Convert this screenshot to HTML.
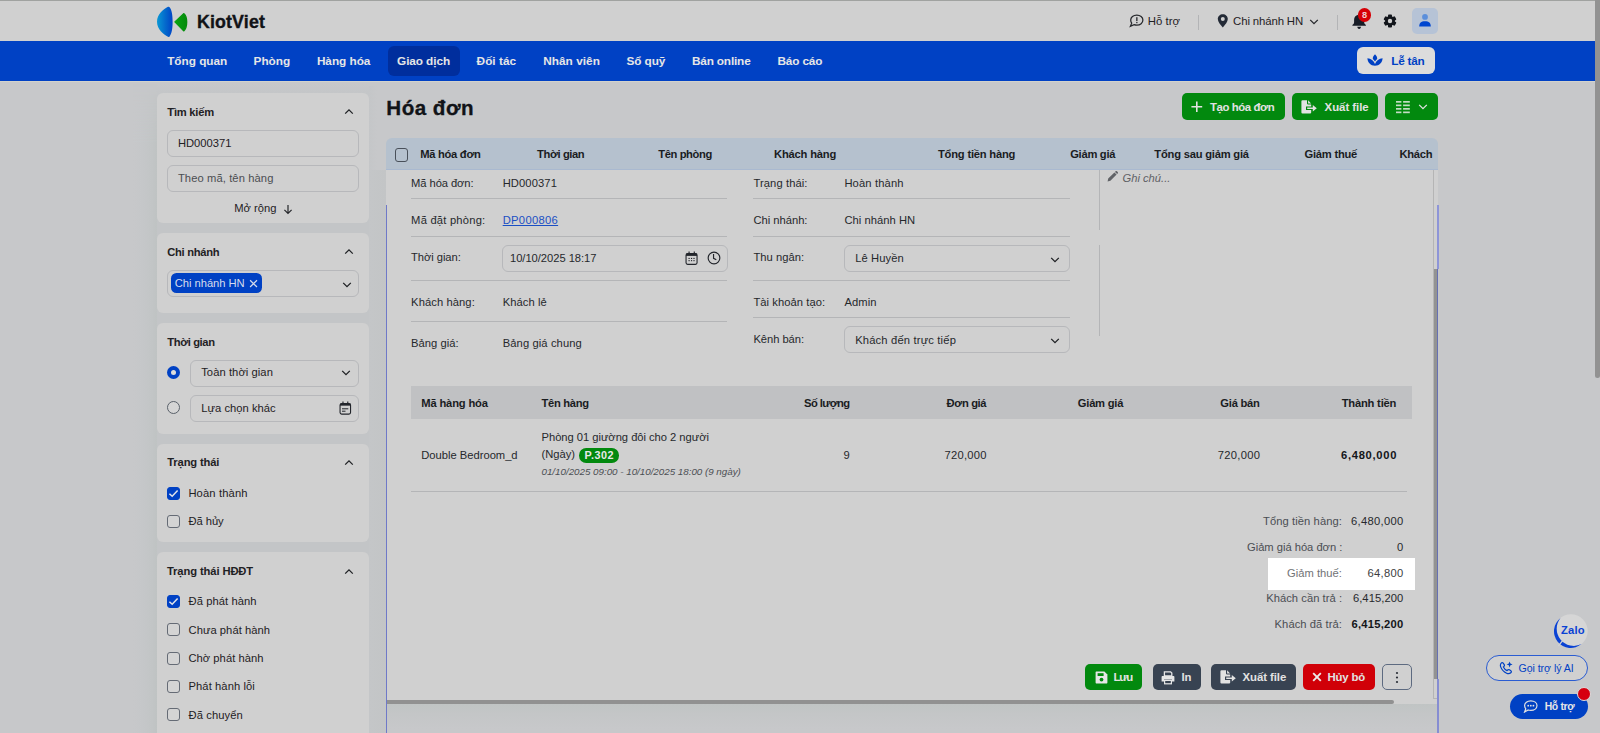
<!DOCTYPE html>
<html lang="vi">
<head>
<meta charset="utf-8">
<title>Hóa đơn - KiotViet</title>
<style>
html,body{margin:0;padding:0;}
body{width:1600px;height:733px;overflow:hidden;background:#c7c8ca;font-family:"Liberation Sans",sans-serif;}
#app{position:relative;width:1600px;height:733px;overflow:hidden;background:#c7c8ca;}
#app div,#app span,#app svg{position:absolute;box-sizing:border-box;}
.t{white-space:nowrap;}
.card{background:#d0d0d0;border-radius:6px;}
.inp{border:1px solid #b7b8bb;border-radius:6px;background:#d0d0d0;}
.cb{width:13.4px;height:13.2px;border:1.1px solid #656b75;border-radius:3px;background:#d4d4d4;}
.cb.on{background:#0041c4;border-color:#0041c4;}
.hl{height:1px;background:#b4b5b7;}
.btn{border-radius:5px;height:26px;}
.g{background:#02890e;}
.dk{background:#384352;}
</style>
</head>
<body>
<div id="app">
<div style="left:0;top:0;width:1595px;height:41px;background:#d0d0d0"></div>
<div style="left:0;top:0;width:1600px;height:1.1px;background:#a0a2a0"></div>
<div style="left:0;top:41px;width:1595px;height:39.6px;background:#0041c4"></div>
<div style="left:1595px;top:0;width:5px;height:378px;background:#929292;border-radius:0 0 3px 3px"></div>
<svg style="left:155px;top:5px" width="36" height="34" viewBox="155 5 36 34">
<defs><linearGradient id="lg1" x1="0" y1="0" x2="1" y2="0"><stop offset="0" stop-color="#0a98d4"/><stop offset=".55" stop-color="#0468cc"/><stop offset="1" stop-color="#0044c6"/></linearGradient>
<linearGradient id="lg2" x1="0" y1="0" x2="1" y2="0"><stop offset="0" stop-color="#08a410"/><stop offset="1" stop-color="#058a0c"/></linearGradient></defs>
<path d="M168 6.8 Q168.9 6.4 169.6 7.2 C171.6 9.4 172.7 15 172.6 21.8 C172.7 28.6 171.6 34.2 169.6 36.4 Q168.9 37.2 168 36.8 C163.6 34.8 157 29.2 157 21.8 C157 14.4 163.6 8.8 168 6.8 Z" fill="url(#lg1)"/>
<path d="M174.9 21.9 L183.7 13.6 C185.6 15 186.7 18.2 186.7 22.1 C186.7 26 185.6 29.4 183.7 30.9 Z" fill="url(#lg2)" stroke="url(#lg2)" stroke-width="1.3" stroke-linejoin="round"/>
</svg>
<svg style="left:1129px;top:14px" width="15" height="14" viewBox="0 0 15 14"><path d="M7.8 1.1 C11.3 1.1 13.9 3.3 13.9 6.1 C13.9 8.9 11.3 11.1 7.8 11.1 C6.8 11.1 5.9 10.9 5.1 10.6 L1.4 12.3 L2.7 9.2 C2 8.3 1.7 7.3 1.7 6.1 C1.7 3.3 4.3 1.1 7.8 1.1 Z" fill="none" stroke="#26282c" stroke-width="1.25"/><rect x="7.2" y="3.2" width="1.3" height="3.8" fill="#26282c"/><rect x="7.2" y="7.9" width="1.3" height="1.3" fill="#26282c"/></svg>
<div style="left:1198px;top:15px;width:1px;height:15px;background:#b3b4b6"></div>
<svg style="left:1217px;top:14px" width="12" height="14" viewBox="0 0 12 14"><path d="M5.8 0.2 C8.6 0.2 10.8 2.3 10.8 5 C10.8 7.6 8.3 10.8 5.8 13.4 C3.3 10.8 0.8 7.6 0.8 5 C0.8 2.3 3 0.2 5.8 0.2 Z M5.8 3 A2 2 0 1 0 5.8 7 A2 2 0 1 0 5.8 3 Z" fill="#232a36" fill-rule="evenodd"/></svg>
<svg style="left:1308.8px;top:17.8px" width="10" height="7" viewBox="0 0 10 7"><path d="M1.2 1.9 L5 5.7 L8.8 1.9" fill="none" stroke="#26282c" stroke-width="1.3"/></svg>
<div style="left:1337px;top:15px;width:1px;height:15px;background:#b3b4b6"></div>
<svg style="left:1351px;top:13px" width="17" height="17" viewBox="0 0 17 17"><path d="M8.15 .5 C8.8 .5 9.2 .9 9.2 1.5 L9.2 1.8 C11.7 2.3 13.2 4.3 13.2 6.8 L13.2 9.2 C13.2 10.3 13.7 11.1 14.9 11.9 L14.9 12.7 L1.4 12.7 L1.4 11.9 C2.6 11.1 3.1 10.3 3.1 9.2 L3.1 6.8 C3.1 4.3 4.6 2.3 7.1 1.8 L7.1 1.5 C7.1 .9 7.5 .5 8.15 .5 Z M6.3 13.8 L10 13.8 C10 15 9.2 15.9 8.15 15.9 C7.1 15.9 6.3 15 6.3 13.8 Z" fill="#171c26"/></svg>
<div style="left:1358.1px;top:8.2px;width:13px;height:13.6px;border-radius:7px;background:#d60006"></div>
<svg style="left:1383px;top:14px" width="14" height="14" viewBox="-7 -7 14 14"><g fill="#12151b"><circle r="4.9"/><rect x="-2" y="-6.4" width="4" height="12.8" rx=".9"/><rect x="-2" y="-6.4" width="4" height="12.8" rx=".9" transform="rotate(60)"/><rect x="-2" y="-6.4" width="4" height="12.8" rx=".9" transform="rotate(120)"/></g><circle r="2.2" fill="#d0d0d0"/></svg>
<div style="left:1412px;top:7.7px;width:26px;height:26px;border-radius:5px;background:#b6c3d6"></div>
<svg style="left:1418px;top:13px" width="14" height="15" viewBox="0 0 14 15"><circle cx="7" cy="3.9" r="2.9" fill="#5b8fdb"/><path d="M1.2 13.4 C1.2 10.2 3 8.3 7 8.3 C11 8.3 12.8 10.2 12.8 13.4 Z" fill="#0046d0"/></svg>
<div style="left:387.7px;top:46px;width:72px;height:29.6px;border-radius:6px;background:#002e9d"></div>
<div style="left:1357.2px;top:47.2px;width:78px;height:27px;border-radius:6px;background:#dcdcdc"></div>
<svg style="left:1367px;top:54px" width="16" height="12" viewBox="0 0 16 12"><g fill="#0041c4"><path d="M8 0.3 C9.6 1.8 10.3 3.4 10.2 5 C9.5 5.6 8.8 6.4 8 7.4 C7.2 6.4 6.5 5.6 5.8 5 C5.7 3.4 6.4 1.8 8 0.3 Z"/><path d="M0.4 4.2 C4 4.4 6.8 6.6 8 10 C9.2 6.6 12 4.4 15.6 4.2 C15.4 8.6 12.4 11.6 8 11.7 C3.6 11.6 0.6 8.6 0.4 4.2 Z"/></g></svg>
<div style="left:0;top:80.7px;width:1595px;height:1.1px;background:#d3d3cc"></div>
<div style="left:133px;top:84px;width:24px;height:649px;background:linear-gradient(to right,#c7c8ca,#c5c7c9 40%,#c2c5c6 78%,#bfc3c3);-webkit-mask-image:linear-gradient(transparent,rgba(0,0,0,.45) 14px,#000 60px);mask-image:linear-gradient(transparent,rgba(0,0,0,.45) 14px,#000 60px)"></div>
<div style="left:157px;top:84px;width:212px;height:649px;background:linear-gradient(#c7c8ca,#c4c6c8 9px,#c3c5c7 40px)"></div>
<div style="left:369px;top:86px;width:17px;height:84px;background:linear-gradient(to right,#c4c6c8,#c7c8ca 8px)"></div>
<div style="left:369px;top:170px;width:17px;height:563px;background:linear-gradient(to right,#c4c6c8,#c3c5c6)"></div>
<div class="card" style="left:156.8px;top:93px;width:212.4px;height:130px"></div>
<div class="card" style="left:156.8px;top:233.4px;width:212.4px;height:79.4px"></div>
<div class="card" style="left:156.8px;top:323.3px;width:212.4px;height:110.8px"></div>
<div class="card" style="left:156.8px;top:443.6px;width:212.4px;height:98.2px"></div>
<div class="card" style="left:156.8px;top:552.4px;width:212.4px;height:200px"></div>
<svg style="left:344px;top:108.3px" width="10" height="7" viewBox="0 0 10 7"><path d="M1.2 5.6 L5 1.8 L8.8 5.6" fill="none" stroke="#1f2124" stroke-width="1.3"/></svg>
<svg style="left:344px;top:248.3px" width="10" height="7" viewBox="0 0 10 7"><path d="M1.2 5.6 L5 1.8 L8.8 5.6" fill="none" stroke="#1f2124" stroke-width="1.3"/></svg>
<svg style="left:344px;top:459.0px" width="10" height="7" viewBox="0 0 10 7"><path d="M1.2 5.6 L5 1.8 L8.8 5.6" fill="none" stroke="#1f2124" stroke-width="1.3"/></svg>
<svg style="left:344px;top:567.6px" width="10" height="7" viewBox="0 0 10 7"><path d="M1.2 5.6 L5 1.8 L8.8 5.6" fill="none" stroke="#1f2124" stroke-width="1.3"/></svg>
<div class="inp" style="left:166.8px;top:130.1px;width:192px;height:26.6px"></div>
<div class="inp" style="left:166.8px;top:165.1px;width:192px;height:26.6px"></div>
<svg style="left:283px;top:203.6px" width="10" height="11" viewBox="0 0 10 11"><path d="M5 1 L5 9.2 M1.4 5.8 L5 9.4 L8.6 5.8" fill="none" stroke="#26282c" stroke-width="1.2"/></svg>
<div class="inp" style="left:166.8px;top:269.8px;width:192px;height:27px"></div>
<div style="left:170.9px;top:273.1px;width:91.5px;height:19.8px;border-radius:5.5px;background:#0041c4"></div>
<svg style="left:249.3px;top:278.6px" width="9" height="9" viewBox="0 0 9 9"><path d="M1.1 1.2 L8 8 M8 1.2 L1.1 8" stroke="#d4daea" stroke-width="1.25"/></svg>
<svg style="left:341.6px;top:280.6px" width="10" height="7" viewBox="0 0 10 7"><path d="M1.2 1.9 L5 5.7 L8.8 1.9" fill="none" stroke="#1f2124" stroke-width="1.3"/></svg>
<div style="left:166.7px;top:365.7px;width:13.5px;height:13.5px;border-radius:7px;background:#0041c4"></div>
<div style="left:170.8px;top:369.8px;width:5.3px;height:5.3px;border-radius:3px;background:#dcdcdc"></div>
<div style="left:166.5px;top:400.5px;width:13.6px;height:13.6px;border-radius:7px;border:1.2px solid #596069;background:#d5d5d5"></div>
<div class="inp" style="left:190px;top:359.8px;width:168.8px;height:27px"></div>
<div class="inp" style="left:190px;top:395px;width:168.8px;height:27px"></div>
<svg style="left:341px;top:369.4px" width="10" height="7" viewBox="0 0 10 7"><path d="M1.2 1.9 L5 5.7 L8.8 1.9" fill="none" stroke="#1f2124" stroke-width="1.3"/></svg>
<svg style="left:339.4px;top:401px" width="13" height="15" viewBox="0 0 13 15"><rect x="1.05" y="2.55" width="10.5" height="10.6" rx="1.6" fill="none" stroke="#22252b" stroke-width="1.1"/><rect x="1.05" y="2.55" width="10.5" height="2.1" fill="#22252b"/><rect x="3.4" y="0.5" width="1.15" height="2.4" fill="#22252b"/><rect x="8.2" y="0.5" width="1.15" height="2.4" fill="#22252b"/><rect x="3" y="7.3" width="6.3" height="1" fill="#22252b"/><rect x="3" y="9.7" width="3.5" height="1" fill="#22252b"/></svg>
<div class="cb on" style="left:166.7px;top:486.6px"><svg style="left:.7px;top:1.2px" width="11" height="9" viewBox="0 0 11 9"><path d="M1.4 4.7 L4.2 7.3 L9.6 1.6" fill="none" stroke="#e2e4ea" stroke-width="1.5"/></svg></div>
<div class="cb" style="left:166.7px;top:514.9px"></div>
<div class="cb on" style="left:166.7px;top:595px"><svg style="left:.7px;top:1.2px" width="11" height="9" viewBox="0 0 11 9"><path d="M1.4 4.7 L4.2 7.3 L9.6 1.6" fill="none" stroke="#e2e4ea" stroke-width="1.5"/></svg></div>
<div class="cb" style="left:166.7px;top:623.2px"></div>
<div class="cb" style="left:166.7px;top:651.6px"></div>
<div class="cb" style="left:166.7px;top:679.9px"></div>
<div class="cb" style="left:166.7px;top:708.2px"></div>
<div class="btn g" style="left:1182px;top:93.2px;width:103px;height:26.8px"></div>
<div class="btn g" style="left:1292px;top:93.2px;width:86px;height:26.8px"></div>
<div class="btn g" style="left:1385px;top:93.2px;width:53px;height:26.8px"></div>
<svg style="left:1190.6px;top:101.2px" width="12" height="12" viewBox="0 0 12 12"><path d="M5.8 0.4 L5.8 11 M0.4 5.7 L11.2 5.7" stroke="#e2e2e2" stroke-width="1.6"/></svg>
<svg style="left:1301.2px;top:100px" width="17" height="14" viewBox="0 0 17 14"><path d="M0.4 1.3 Q0.4 .2 1.5 .2 L6 .2 L6 3.4 Q6 4.5 7.1 4.5 L10.2 4.5 L10.2 6.5 L5 6.5 L5 10 L10.2 10 L10.2 12.4 Q10.2 13.5 9.1 13.5 L1.5 13.5 Q.4 13.5 .4 12.4 Z M7.1 .3 L10.1 3.4 L7.1 3.4 Z" fill="#e2e2e2"/><path d="M6.2 7.5 L11.8 7.5 L11.8 5.1 L15.8 8.25 L11.8 11.4 L11.8 9 L6.2 9 Z" fill="#e2e2e2"/></svg>
<svg style="left:1395.6px;top:100.6px" width="14" height="13" viewBox="0 0 14 13"><g fill="#c4dcc4"><rect x="0" y="0" width="5.4" height="1.7"/><rect x="7.1" y="0" width="6.7" height="1.7"/><rect x="0" y="3.5" width="5.4" height="1.7"/><rect x="7.1" y="3.5" width="6.7" height="1.7"/><rect x="0" y="7" width="5.4" height="1.7"/><rect x="7.1" y="7" width="6.7" height="1.7"/><rect x="0" y="10.5" width="5.4" height="1.7"/><rect x="7.1" y="10.5" width="6.7" height="1.7"/></g></svg>
<svg style="left:1417.6px;top:103.0px" width="10" height="7" viewBox="0 0 10 7"><path d="M1.2 1.9 L5 5.7 L8.8 1.9" fill="none" stroke="#e2e2e2" stroke-width="1.3"/></svg>
<div style="left:386px;top:150px;width:1052px;height:554.2px;background:#d0d0d0"></div>
<div style="left:386px;top:704.2px;width:1052px;height:29px;background:linear-gradient(#c0c4c4,#c4c6c7 10px,#c7c8ca 25px)"></div>
<div style="left:386px;top:138.2px;width:1052.2px;height:31.6px;border-radius:6px 6px 0 0;background:#b5c1ce;border-bottom:1px solid #a9b9d0"></div>
<div class="cb" style="left:395px;top:148px;width:12.8px;height:13.6px;border-color:#49505a;background:transparent"></div>
<div style="left:1433.2px;top:170px;width:4.8px;height:529.4px;background:#d0d0d0;border-left:1px solid #b5b5b5;border-bottom:1px solid #b5b5b5"></div>
<div style="left:1433.8px;top:269.2px;width:3.4px;height:410px;background:#939392"></div>
<div style="left:386px;top:700.1px;width:1007.6px;height:3.9px;background:#919191;border-radius:0 2px 2px 0"></div>
<div style="left:385.85px;top:205.2px;width:1.3px;height:530px;background:#6f79c8"></div>
<div style="left:1436.9px;top:204.9px;width:2px;height:64.4px;background:#8e95d8"></div>
<div style="left:1436.9px;top:269.2px;width:1.6px;height:410.2px;background:#6670b4"></div>
<div style="left:1437px;top:679.3px;width:1.5px;height:54px;background:#868dd2"></div>
<div class="hl" style="left:411px;top:198.15px;width:316.4px"></div>
<div class="hl" style="left:411px;top:236.0px;width:316.4px"></div>
<div class="hl" style="left:411px;top:280.0px;width:316.4px"></div>
<div class="hl" style="left:411px;top:321.1px;width:316.4px"></div>
<div class="hl" style="left:753.2px;top:198.15px;width:316.4px"></div>
<div class="hl" style="left:753.2px;top:236.0px;width:316.4px"></div>
<div class="hl" style="left:753.2px;top:280.0px;width:316.4px"></div>
<div class="hl" style="left:753.2px;top:317.2px;width:316.4px"></div>
<div style="left:1099.2px;top:170px;width:1px;height:60.4px;background:#b4b5b7"></div>
<div style="left:1099.2px;top:245.4px;width:1px;height:91px;background:#b4b5b7"></div>
<div class="inp" style="left:502.2px;top:245.2px;width:225.4px;height:26.6px;background:#d0d0d0"></div>
<div class="inp" style="left:844.4px;top:245.2px;width:225.4px;height:26.6px;background:#d0d0d0"></div>
<div class="inp" style="left:844.4px;top:326.1px;width:225.4px;height:27px;background:#d0d0d0"></div>
<svg style="left:1050px;top:255.6px" width="10" height="7" viewBox="0 0 10 7"><path d="M1.2 1.9 L5 5.7 L8.8 1.9" fill="none" stroke="#1f2124" stroke-width="1.3"/></svg>
<svg style="left:1050px;top:337.2px" width="10" height="7" viewBox="0 0 10 7"><path d="M1.2 1.9 L5 5.7 L8.8 1.9" fill="none" stroke="#1f2124" stroke-width="1.3"/></svg>
<svg style="left:685.4px;top:251.1px" width="14" height="15" viewBox="0 0 14 15"><rect x="1.05" y="2.6" width="11" height="10.8" rx="1.6" fill="none" stroke="#22252b" stroke-width="1.1"/><rect x="1.05" y="2.6" width="11" height="2.3" fill="#22252b"/><rect x="3.5" y="0.5" width="1.15" height="2.4" fill="#22252b"/><rect x="8.7" y="0.5" width="1.15" height="2.4" fill="#22252b"/><g fill="#22252b"><rect x="3.5" y="6.9" width="1.2" height="1.1"/><rect x="5.95" y="6.9" width="1.2" height="1.1"/><rect x="8.4" y="6.9" width="1.2" height="1.1"/><rect x="3.5" y="9.1" width="1.2" height="1.1"/><rect x="5.95" y="9.1" width="1.2" height="1.1"/><rect x="8.4" y="9.1" width="1.2" height="1.1"/></g></svg>
<svg style="left:706.6px;top:251.3px" width="14" height="14" viewBox="0 0 14 14"><circle cx="7" cy="7" r="5.85" fill="none" stroke="#22252b" stroke-width="1.15"/><path d="M6.55 2.9 L6.55 7.3 L9.3 8.8" fill="none" stroke="#22252b" stroke-width="1.15"/></svg>
<svg style="left:1107.2px;top:170.6px" width="11" height="11" viewBox="0 0 11 11"><path d="M0.6 10.4 L1.2 7.6 L7.4 1.4 L9.6 3.6 L3.4 9.8 Z M8 0.9 L8.6 0.3 C9 -0.1 9.5 -0.1 9.9 0.3 L10.7 1.1 C11.1 1.5 11.1 2 10.7 2.4 L10.1 3 Z" fill="#606266"/></svg>
<div style="left:411px;top:386.2px;width:1000.6px;height:32.6px;background:#c0c1c3"></div>
<div class="hl" style="left:411px;top:491px;width:995.6px"></div>
<div style="left:578.8px;top:448.2px;width:40.6px;height:14.4px;border-radius:7.2px;background:#02890e"></div>
<div style="left:1267.6px;top:558.2px;width:147px;height:31.6px;background:#ffffff"></div>
<div class="btn g" style="left:1084.8px;top:664.4px;width:57.6px"></div>
<div class="btn dk" style="left:1152.6px;top:664.4px;width:48px"></div>
<div class="btn dk" style="left:1211px;top:664.4px;width:84.6px"></div>
<div class="btn" style="left:1302.6px;top:664.4px;width:72.6px;background:#d00008"></div>
<div class="btn" style="left:1381.8px;top:664.4px;width:30px;border:1px solid #5d6a80;background:#d0d0d0"></div>
<svg style="left:1094.6px;top:671px" width="13" height="13" viewBox="0 0 13 13"><path d="M1.6 .6 L9.4 .6 L12.4 3.6 L12.4 11.4 C12.4 12 12 12.4 11.4 12.4 L1.6 12.4 C1 12.4 .6 12 .6 11.4 L.6 1.6 C.6 1 1 .6 1.6 .6 Z" fill="#e6e6e6"/><rect x="2.6" y="2.2" width="6" height="2.8" fill="#02890e"/><circle cx="6.5" cy="8.6" r="1.9" fill="#02890e"/></svg>
<svg style="left:1161.4px;top:670.6px" width="14" height="14" viewBox="0 0 14 14"><path d="M3.4 .8 L9.6 .8 L10.8 2 L10.8 5 L3.4 5 Z" fill="none" stroke="#e6e6e6" stroke-width="1.3"/><path d="M1.6 5 L12.4 5 C13 5 13.4 5.4 13.4 6 L13.4 10.4 L11 10.4 L11 8.4 L3 8.4 L3 10.4 L.6 10.4 L.6 6 C.6 5.4 1 5 1.6 5 Z" fill="#e6e6e6"/><rect x="3.6" y="9.4" width="6.8" height="3.4" fill="none" stroke="#e6e6e6" stroke-width="1.2"/></svg>
<svg style="left:1220.4px;top:670px" width="17" height="14" viewBox="0 0 17 14"><path d="M0.4 1.3 Q0.4 .2 1.5 .2 L6 .2 L6 3.4 Q6 4.5 7.1 4.5 L10.2 4.5 L10.2 6.5 L5 6.5 L5 10 L10.2 10 L10.2 12.4 Q10.2 13.5 9.1 13.5 L1.5 13.5 Q.4 13.5 .4 12.4 Z M7.1 .3 L10.1 3.4 L7.1 3.4 Z" fill="#e2e2e2"/><path d="M6.2 7.5 L11.8 7.5 L11.8 5.1 L15.8 8.25 L11.8 11.4 L11.8 9 L6.2 9 Z" fill="#e2e2e2"/></svg>
<svg style="left:1312px;top:672.4px" width="10" height="10" viewBox="0 0 10 10"><path d="M1.2 1.2 L8.8 8.8 M8.8 1.2 L1.2 8.8" stroke="#ececec" stroke-width="1.9"/></svg>
<svg style="left:1394.6px;top:671px" width="4" height="13" viewBox="0 0 4 13"><g fill="#2a2e36"><circle cx="2" cy="2" r="1.1"/><circle cx="2" cy="6.5" r="1.1"/><circle cx="2" cy="11" r="1.1"/></g></svg>
<svg style="left:1550px;top:610px" width="42" height="42" viewBox="1550 610 42 42"><circle cx="1570.9" cy="631.1" r="16.8" fill="#d6d6d6"/><path d="M1560.52 617.89 A16.8 16.8 0 1 0 1581.51 644.12 A17.2 17.2 0 0 1 1560.52 617.89 Z" fill="#0a42d4"/><path d="M1563.4 639.6 L1558.4 645.8" stroke="#d3d3d4" stroke-width="1.3" fill="none"/></svg>
<div style="left:1485.6px;top:654.6px;width:102.4px;height:26.8px;border-radius:13.4px;border:1px solid #2a5cd2;background:#d0d0d0"></div>
<svg style="left:1499px;top:661px" width="15" height="14" viewBox="0 0 15 14"><path d="M2.2 2.2 C2.8 1.4 3.6 1.4 4.2 2.2 L5.2 3.6 C5.6 4.2 5.5 4.8 5 5.3 L4.4 5.9 C5.2 7.6 6.4 8.8 8.1 9.6 L8.7 9 C9.2 8.5 9.8 8.4 10.4 8.8 L11.8 9.8 C12.6 10.4 12.6 11.2 11.8 11.8 C10.6 12.9 9.2 13 7.6 12.2 C4.6 10.7 2.6 8.4 1.6 5.6 C1.2 4.2 1.4 3.1 2.2 2.2 Z" fill="none" stroke="#0041c4" stroke-width="1.2"/><path d="M10.6 .4 L11.4 2.6 L13.6 3.4 L11.4 4.2 L10.6 6.4 L9.8 4.2 L7.6 3.4 L9.8 2.6 Z" fill="#0041c4"/></svg>
<div style="left:1510px;top:694.2px;width:77.6px;height:24.8px;border-radius:12.4px;background:#0041c4"></div>
<svg style="left:1523px;top:700.4px" width="15" height="13" viewBox="0 0 15 13"><path d="M7.8 .8 C11.4 .8 14 2.9 14 5.6 C14 8.3 11.4 10.4 7.8 10.4 C6.9 10.4 6 10.3 5.2 10 L1.6 12 L2.8 8.8 C2 7.9 1.6 6.8 1.6 5.6 C1.6 2.9 4.2 .8 7.8 .8 Z" fill="none" stroke="#e2e2e2" stroke-width="1.2"/><g fill="#e2e2e2"><circle cx="5.2" cy="5.7" r=".9"/><circle cx="7.8" cy="5.7" r=".9"/><circle cx="10.4" cy="5.7" r=".9"/></g></svg>
<div style="left:1577px;top:687.2px;width:14.2px;height:14.2px;border-radius:7.1px;background:#d6000f;border:1px solid #dcdcdc"></div>
<!-- text -->
<span class="t" style="top:14px;font-size:17.8px;line-height:17.8px;font-weight:700;color:#111317;letter-spacing:0.163px;left:196.90px;-webkit-text-stroke:.35px #111317;">KiotViet</span>
<span class="t" style="top:16px;font-size:11.4px;line-height:11.4px;font-weight:400;color:#1f2124;letter-spacing:-0.011px;left:1147.80px;">Hỗ trợ</span>
<span class="t" style="top:16px;font-size:11.4px;line-height:11.4px;font-weight:400;color:#1f2124;letter-spacing:-0.133px;left:1233.10px;">Chi nhánh HN</span>
<span class="t" style="top:11px;font-size:9.2px;line-height:9.2px;font-weight:700;color:#efcccc;left:1361.90px;">8</span>
<span class="t" style="top:56px;font-size:11.8px;line-height:11.8px;font-weight:700;color:#e6e6e6;letter-spacing:-0.023px;left:167.20px;">Tổng quan</span>
<span class="t" style="top:56px;font-size:11.8px;line-height:11.8px;font-weight:700;color:#e6e6e6;letter-spacing:-0.051px;left:253.60px;">Phòng</span>
<span class="t" style="top:56px;font-size:11.8px;line-height:11.8px;font-weight:700;color:#e6e6e6;letter-spacing:-0.036px;left:316.90px;">Hàng hóa</span>
<span class="t" style="top:56px;font-size:11.8px;line-height:11.8px;font-weight:700;color:#e6e6e6;letter-spacing:-0.094px;left:397.10px;">Giao dịch</span>
<span class="t" style="top:56px;font-size:11.8px;line-height:11.8px;font-weight:700;color:#e6e6e6;letter-spacing:0.026px;left:476.60px;">Đối tác</span>
<span class="t" style="top:56px;font-size:11.8px;line-height:11.8px;font-weight:700;color:#e6e6e6;letter-spacing:0.039px;left:543.20px;">Nhân viên</span>
<span class="t" style="top:56px;font-size:11.8px;line-height:11.8px;font-weight:700;color:#e6e6e6;letter-spacing:-0.126px;left:626.60px;">Sổ quỹ</span>
<span class="t" style="top:56px;font-size:11.8px;line-height:11.8px;font-weight:700;color:#e6e6e6;letter-spacing:-0.179px;left:692.00px;">Bán online</span>
<span class="t" style="top:56px;font-size:11.8px;line-height:11.8px;font-weight:700;color:#e6e6e6;letter-spacing:-0.134px;left:777.40px;">Báo cáo</span>
<span class="t" style="top:56px;font-size:11.8px;line-height:11.8px;font-weight:700;color:#0041c4;letter-spacing:-0.230px;left:1391.20px;">Lễ tân</span>
<span class="t" style="top:107px;font-size:11.2px;line-height:11.2px;font-weight:700;color:#1f2124;letter-spacing:-0.243px;left:167.30px;">Tìm kiếm</span>
<span class="t" style="top:138px;font-size:11.2px;line-height:11.2px;font-weight:400;color:#1f2124;letter-spacing:0.014px;left:177.90px;">HD000371</span>
<span class="t" style="top:173px;font-size:11.2px;line-height:11.2px;font-weight:400;color:#4c4e52;letter-spacing:0.099px;left:177.90px;">Theo mã, tên hàng</span>
<span class="t" style="top:203px;font-size:11.2px;line-height:11.2px;font-weight:400;color:#1f2124;letter-spacing:-0.009px;left:234.30px;">Mở rộng</span>
<span class="t" style="top:247px;font-size:11.2px;line-height:11.2px;font-weight:700;color:#1f2124;letter-spacing:-0.298px;left:167.30px;">Chi nhánh</span>
<span class="t" style="top:278px;font-size:11.2px;line-height:11.2px;font-weight:400;color:#d6dcec;letter-spacing:-0.035px;left:174.80px;">Chi nhánh HN</span>
<span class="t" style="top:337px;font-size:11.2px;line-height:11.2px;font-weight:700;color:#1f2124;letter-spacing:-0.393px;left:167.30px;">Thời gian</span>
<span class="t" style="top:367px;font-size:11.2px;line-height:11.2px;font-weight:400;color:#1f2124;letter-spacing:0.071px;left:201.20px;">Toàn thời gian</span>
<span class="t" style="top:403px;font-size:11.2px;line-height:11.2px;font-weight:400;color:#1f2124;letter-spacing:0.038px;left:201.20px;">Lựa chọn khác</span>
<span class="t" style="top:457px;font-size:11.2px;line-height:11.2px;font-weight:700;color:#1f2124;letter-spacing:-0.152px;left:167.30px;">Trạng thái</span>
<span class="t" style="top:488px;font-size:11.2px;line-height:11.2px;font-weight:400;color:#1f2124;letter-spacing:0.138px;left:188.40px;">Hoàn thành</span>
<span class="t" style="top:516px;font-size:11.2px;line-height:11.2px;font-weight:400;color:#1f2124;letter-spacing:-0.031px;left:188.40px;">Đã hủy</span>
<span class="t" style="top:566px;font-size:11.2px;line-height:11.2px;font-weight:700;color:#1f2124;letter-spacing:-0.096px;left:166.90px;">Trạng thái HĐĐT</span>
<span class="t" style="top:596px;font-size:11.2px;line-height:11.2px;font-weight:400;color:#1f2124;letter-spacing:0.083px;left:188.50px;">Đã phát hành</span>
<span class="t" style="top:625px;font-size:11.2px;line-height:11.2px;font-weight:400;color:#1f2124;letter-spacing:0.046px;left:188.50px;">Chưa phát hành</span>
<span class="t" style="top:653px;font-size:11.2px;line-height:11.2px;font-weight:400;color:#1f2124;letter-spacing:0.031px;left:188.50px;">Chờ phát hành</span>
<span class="t" style="top:681px;font-size:11.2px;line-height:11.2px;font-weight:400;color:#1f2124;letter-spacing:0.082px;left:188.50px;">Phát hành lỗi</span>
<span class="t" style="top:710px;font-size:11.2px;line-height:11.2px;font-weight:400;color:#1f2124;letter-spacing:0.100px;left:188.50px;">Đã chuyển</span>
<span class="t" style="top:98px;font-size:20.6px;line-height:20.6px;font-weight:700;color:#111317;letter-spacing:0.477px;left:386.30px;-webkit-text-stroke:.3px #111317;">Hóa đơn</span>
<span class="t" style="top:102px;font-size:11.4px;line-height:11.4px;font-weight:700;color:#e2e2e2;letter-spacing:-0.416px;left:1210.00px;">Tạo hóa đơn</span>
<span class="t" style="top:102px;font-size:11.4px;line-height:11.4px;font-weight:700;color:#e2e2e2;letter-spacing:-0.027px;left:1324.60px;">Xuất file</span>
<span class="t" style="top:149px;font-size:11.2px;line-height:11.2px;font-weight:700;color:#1a1c1f;letter-spacing:-0.298px;left:420.30px;">Mã hóa đơn</span>
<span class="t" style="top:149px;font-size:11.2px;line-height:11.2px;font-weight:700;color:#1a1c1f;letter-spacing:-0.405px;left:537.10px;">Thời gian</span>
<span class="t" style="top:149px;font-size:11.2px;line-height:11.2px;font-weight:700;color:#1a1c1f;letter-spacing:-0.384px;left:658.20px;">Tên phòng</span>
<span class="t" style="top:149px;font-size:11.2px;line-height:11.2px;font-weight:700;color:#1a1c1f;letter-spacing:-0.192px;left:774.00px;">Khách hàng</span>
<span class="t" style="top:149px;font-size:11.2px;line-height:11.2px;font-weight:700;color:#1a1c1f;letter-spacing:-0.213px;left:938.00px;">Tổng tiền hàng</span>
<span class="t" style="top:149px;font-size:11.2px;line-height:11.2px;font-weight:700;color:#1a1c1f;letter-spacing:-0.281px;left:1070.20px;">Giảm giá</span>
<span class="t" style="top:149px;font-size:11.2px;line-height:11.2px;font-weight:700;color:#1a1c1f;letter-spacing:-0.220px;left:1154.30px;">Tổng sau giảm giá</span>
<span class="t" style="top:149px;font-size:11.2px;line-height:11.2px;font-weight:700;color:#1a1c1f;letter-spacing:-0.238px;left:1304.50px;">Giảm thuế</span>
<span class="t" style="top:149px;font-size:11.2px;line-height:11.2px;font-weight:700;color:#1a1c1f;letter-spacing:-0.251px;left:1399.40px;">Khách</span>
<span class="t" style="top:178px;font-size:11.2px;line-height:11.2px;font-weight:400;color:#26282c;letter-spacing:-0.081px;left:411.10px;">Mã hóa đơn:</span>
<span class="t" style="top:215px;font-size:11.2px;line-height:11.2px;font-weight:400;color:#26282c;letter-spacing:0.214px;left:411.10px;">Mã đặt phòng:</span>
<span class="t" style="top:252px;font-size:11.2px;line-height:11.2px;font-weight:400;color:#26282c;letter-spacing:-0.061px;left:411.10px;">Thời gian:</span>
<span class="t" style="top:297px;font-size:11.2px;line-height:11.2px;font-weight:400;color:#26282c;letter-spacing:0.087px;left:411.10px;">Khách hàng:</span>
<span class="t" style="top:338px;font-size:11.2px;line-height:11.2px;font-weight:400;color:#26282c;letter-spacing:0.027px;left:411.10px;">Bảng giá:</span>
<span class="t" style="top:178px;font-size:11.2px;line-height:11.2px;font-weight:400;color:#26282c;letter-spacing:0.100px;left:502.70px;">HD000371</span>
<span class="t" style="top:215px;font-size:11.2px;line-height:11.2px;font-weight:400;color:#1a4fc4;letter-spacing:0.318px;left:502.70px;text-decoration:underline;text-underline-offset:1px;text-decoration-thickness:0.8px;">DP000806</span>
<span class="t" style="top:253px;font-size:11.2px;line-height:11.2px;font-weight:400;color:#26282c;letter-spacing:-0.041px;left:510.00px;">10/10/2025 18:17</span>
<span class="t" style="top:297px;font-size:11.2px;line-height:11.2px;font-weight:400;color:#26282c;letter-spacing:0.079px;left:502.70px;">Khách lẻ</span>
<span class="t" style="top:338px;font-size:11.2px;line-height:11.2px;font-weight:400;color:#26282c;letter-spacing:0.103px;left:502.70px;">Bảng giá chung</span>
<span class="t" style="top:178px;font-size:11.2px;line-height:11.2px;font-weight:400;color:#26282c;letter-spacing:0.102px;left:753.40px;">Trạng thái:</span>
<span class="t" style="top:215px;font-size:11.2px;line-height:11.2px;font-weight:400;color:#26282c;letter-spacing:-0.003px;left:753.40px;">Chi nhánh:</span>
<span class="t" style="top:252px;font-size:11.2px;line-height:11.2px;font-weight:400;color:#26282c;letter-spacing:0.039px;left:753.40px;">Thu ngân:</span>
<span class="t" style="top:297px;font-size:11.2px;line-height:11.2px;font-weight:400;color:#26282c;letter-spacing:0.061px;left:753.40px;">Tài khoản tạo:</span>
<span class="t" style="top:334px;font-size:11.2px;line-height:11.2px;font-weight:400;color:#26282c;letter-spacing:-0.039px;left:753.40px;">Kênh bán:</span>
<span class="t" style="top:178px;font-size:11.2px;line-height:11.2px;font-weight:400;color:#26282c;letter-spacing:0.138px;left:844.40px;">Hoàn thành</span>
<span class="t" style="top:215px;font-size:11.2px;line-height:11.2px;font-weight:400;color:#26282c;letter-spacing:0.038px;left:844.40px;">Chi nhánh HN</span>
<span class="t" style="top:253px;font-size:11.2px;line-height:11.2px;font-weight:400;color:#26282c;letter-spacing:0.085px;left:855.20px;">Lê Huyền</span>
<span class="t" style="top:297px;font-size:11.2px;line-height:11.2px;font-weight:400;color:#26282c;letter-spacing:0.095px;left:844.40px;">Admin</span>
<span class="t" style="top:335px;font-size:11.2px;line-height:11.2px;font-weight:400;color:#26282c;letter-spacing:0.168px;left:855.20px;">Khách đến trực tiếp</span>
<span class="t" style="top:173px;font-size:11.2px;line-height:11.2px;font-weight:400;color:#5f6165;font-style:italic;letter-spacing:0.001px;left:1122.50px;">Ghi chú...</span>
<span class="t" style="top:398px;font-size:11.2px;line-height:11.2px;font-weight:700;color:#1a1c1f;letter-spacing:-0.168px;left:421.30px;">Mã hàng hóa</span>
<span class="t" style="top:398px;font-size:11.2px;line-height:11.2px;font-weight:700;color:#1a1c1f;letter-spacing:-0.305px;left:541.50px;">Tên hàng</span>
<span class="t" style="top:398px;font-size:11.2px;line-height:11.2px;font-weight:700;color:#1a1c1f;letter-spacing:-0.607px;left:804.10px;">Số lượng</span>
<span class="t" style="top:398px;font-size:11.2px;line-height:11.2px;font-weight:700;color:#1a1c1f;letter-spacing:-0.357px;left:946.60px;">Đơn giá</span>
<span class="t" style="top:398px;font-size:11.2px;line-height:11.2px;font-weight:700;color:#1a1c1f;letter-spacing:-0.238px;left:1077.80px;">Giảm giá</span>
<span class="t" style="top:398px;font-size:11.2px;line-height:11.2px;font-weight:700;color:#1a1c1f;letter-spacing:-0.239px;left:1220.30px;">Giá bán</span>
<span class="t" style="top:398px;font-size:11.2px;line-height:11.2px;font-weight:700;color:#1a1c1f;letter-spacing:-0.207px;left:1341.70px;">Thành tiền</span>
<span class="t" style="top:450px;font-size:11.2px;line-height:11.2px;font-weight:400;color:#26282c;letter-spacing:-0.007px;left:421.30px;">Double Bedroom_d</span>
<span class="t" style="top:432px;font-size:11.2px;line-height:11.2px;font-weight:400;color:#26282c;letter-spacing:-0.029px;left:541.50px;">Phòng 01 giường đôi cho 2 người</span>
<span class="t" style="top:449px;font-size:11.2px;line-height:11.2px;font-weight:400;color:#26282c;letter-spacing:0.004px;left:541.50px;">(Ngày)</span>
<span class="t" style="top:450px;font-size:10.8px;line-height:10.8px;font-weight:700;color:#e8e8e8;letter-spacing:0.518px;left:584.60px;">P.302</span>
<span class="t" style="top:467px;font-size:9.8px;line-height:9.8px;font-weight:400;color:#4c4f54;font-style:italic;letter-spacing:-0.014px;left:541.50px;">01/10/2025 09:00 - 10/10/2025 18:00 (9 ngày)</span>
<span class="t" style="top:450px;font-size:11.2px;line-height:11.2px;font-weight:400;color:#26282c;left:843.40px;">9</span>
<span class="t" style="top:450px;font-size:11.2px;line-height:11.2px;font-weight:400;color:#26282c;letter-spacing:0.274px;left:944.50px;">720,000</span>
<span class="t" style="top:450px;font-size:11.2px;line-height:11.2px;font-weight:400;color:#26282c;letter-spacing:0.274px;left:1217.80px;">720,000</span>
<span class="t" style="top:450px;font-size:11.2px;line-height:11.2px;font-weight:700;color:#14161a;letter-spacing:0.702px;left:1341.00px;">6,480,000</span>
<span class="t" style="top:516px;font-size:11.2px;line-height:11.2px;font-weight:400;color:#4b4e53;letter-spacing:0.082px;left:1263.00px;">Tổng tiền hàng:</span>
<span class="t" style="top:516px;font-size:11.2px;line-height:11.2px;font-weight:400;color:#26282c;letter-spacing:0.315px;left:1351.00px;">6,480,000</span>
<span class="t" style="top:542px;font-size:11.2px;line-height:11.2px;font-weight:400;color:#4b4e53;letter-spacing:-0.021px;left:1247.00px;">Giảm giá hóa đơn :</span>
<span class="t" style="top:542px;font-size:11.2px;line-height:11.2px;font-weight:400;color:#26282c;left:1396.90px;">0</span>
<span class="t" style="top:568px;font-size:11.2px;line-height:11.2px;font-weight:400;color:#717376;letter-spacing:0.018px;left:1287.00px;">Giảm thuế:</span>
<span class="t" style="top:568px;font-size:11.2px;line-height:11.2px;font-weight:400;color:#3c3e42;letter-spacing:0.336px;left:1367.40px;">64,800</span>
<span class="t" style="top:593px;font-size:11.2px;line-height:11.2px;font-weight:400;color:#4b4e53;letter-spacing:0.046px;left:1266.20px;">Khách cần trả :</span>
<span class="t" style="top:593px;font-size:11.2px;line-height:11.2px;font-weight:400;color:#26282c;letter-spacing:0.077px;left:1352.90px;">6,415,200</span>
<span class="t" style="top:619px;font-size:11.2px;line-height:11.2px;font-weight:400;color:#4b4e53;letter-spacing:0.063px;left:1274.60px;">Khách đã trả:</span>
<span class="t" style="top:619px;font-size:11.2px;line-height:11.2px;font-weight:700;color:#14161a;letter-spacing:0.265px;left:1351.40px;">6,415,200</span>
<span class="t" style="top:672px;font-size:11.4px;line-height:11.4px;font-weight:700;color:#e2e2e2;letter-spacing:-1.200px;left:1113.40px;">Lưu</span>
<span class="t" style="top:672px;font-size:11.4px;line-height:11.4px;font-weight:700;color:#e2e2e2;letter-spacing:-0.225px;left:1181.60px;">In</span>
<span class="t" style="top:672px;font-size:11.4px;line-height:11.4px;font-weight:700;color:#e2e2e2;letter-spacing:-0.077px;left:1242.60px;">Xuất file</span>
<span class="t" style="top:672px;font-size:11.4px;line-height:11.4px;font-weight:700;color:#e2e2e2;letter-spacing:-0.222px;left:1327.60px;">Hủy bỏ</span>
<span class="t" style="top:625px;font-size:11.2px;line-height:11.2px;font-weight:700;color:#0a42d4;letter-spacing:0.133px;left:1561.10px;">Zalo</span>
<span class="t" style="top:663px;font-size:10.6px;line-height:10.6px;font-weight:400;color:#0041c4;letter-spacing:-0.051px;left:1518.50px;">Gọi trợ lý AI</span>
<span class="t" style="top:702px;font-size:10.4px;line-height:10.4px;font-weight:700;color:#e6e6e6;letter-spacing:-0.328px;left:1544.70px;">Hỗ trợ</span>
</div>
</body>
</html>
